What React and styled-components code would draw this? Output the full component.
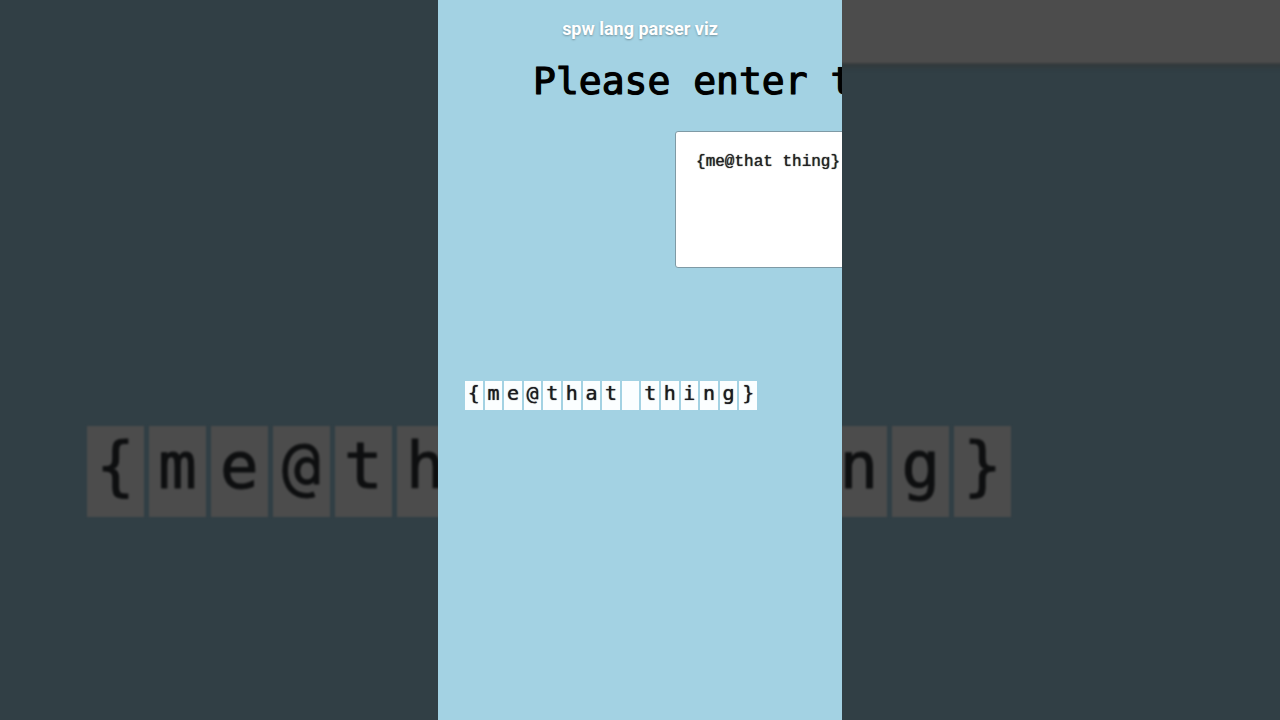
import React from "react";
import styled, { createGlobalStyle } from "styled-components";

const SOURCE = "{me@that thing}";
const mono = '"DejaVu Sans Mono", "Liberation Mono", monospace';

const GlobalStyle = createGlobalStyle`
  * { box-sizing: border-box; }
  body { margin: 0; background: #313f45; }
`;

const Stage = styled.div`
  position: relative;
  display: flex;
  justify-content: center;
  min-height: 100vh;
  overflow: hidden;
  background: #313f45;
`;

const Backdrop = styled.div`
  position: absolute;
  inset: 0;
  filter: blur(1px);
`;

const BackdropBand = styled.div`
  height: 72px;
  margin: -8px -8px 362px 59%;
  background: #4c4c4c;
  border-bottom: 1px solid #3b3e3f;
  box-shadow: 0 3px 4px #33393b;
`;

const Player = styled.main`
  position: relative;
  display: flex;
  flex-direction: column;
  width: 56.1vh;
  min-height: 100vh;
  overflow: hidden;
  background: #a3d2e3;
`;

const VideoTitle = styled.header`
  padding-top: 17px;
  text-align: center;
  font: 700 18px/24px Roboto, sans-serif;
  color: #fff;
  text-shadow: 0 1px 2px rgba(0, 0, 0, 0.3);
`;

const Prompt = styled.label`
  margin: 16px 0 0 95px;
  font: 400 38px/48px ${mono};
  -webkit-text-stroke: 1px #000;
  text-shadow: 0 0 1px #000;
  white-space: pre;
  color: #000;
`;

const SourceInput = styled.textarea`
  flex: none;
  width: 480px;
  height: 137px;
  margin: 26px 0 0 237px;
  padding: 20px;
  border: 1px solid #7f9aa5;
  border-radius: 3px;
  outline: none;
  resize: none;
  background: #fff;
  color: #222;
  font: 400 16px/20px "Liberation Mono", monospace;
  text-shadow: 0 0 1px #222;
`;

const Tokens = styled.div`
  display: flex;
  gap: ${(p) => (p.$large ? "5px" : "2px")};
  width: ${(p) => (p.$large ? "72.2%" : "292px")};
  margin: ${(p) => (p.$large ? "0 0 0 6.8%" : "113px 0 0 27px")};
  font: 400 ${(p) => (p.$large ? "5vw" : "20px")} / 1 ${mono};
  -webkit-text-stroke: ${(p) => (p.$large ? "1px #0e0f10" : "0")};
  text-shadow: ${(p) => (p.$large ? "none" : "0 0 1px #1b1b1f")};
  color: ${(p) => (p.$large ? "#0e0f10" : "#1b1b1f")};
`;

const Token = styled.span`
  flex: 1 1 0;
  display: flex;
  justify-content: center;
  min-width: 0;
  height: ${(p) => (p.$large ? "91px" : "29px")};
  padding-top: ${(p) => (p.$large ? "8px" : "2px")};
  background: ${(p) => (p.$large ? "#4c4c4c" : "#fbfeff")};
  white-space: pre;
`;

function TokenRow({ text, large }) {
  return (
    <Tokens $large={large}>
      {[...text].map((char, i) => (
        <Token key={i} $large={large}>
          {char}
        </Token>
      ))}
    </Tokens>
  );
}

export default function App() {
  return (
    <Stage>
      <GlobalStyle />
      <Backdrop aria-hidden="true">
        <BackdropBand />
        <TokenRow text={SOURCE} large />
      </Backdrop>
      <Player>
        <VideoTitle>spw lang parser viz</VideoTitle>
        <Prompt htmlFor="source">Please enter t</Prompt>
        <SourceInput id="source" defaultValue={SOURCE} spellCheck={false} />
        <TokenRow text={SOURCE} />
      </Player>
    </Stage>
  );
}
